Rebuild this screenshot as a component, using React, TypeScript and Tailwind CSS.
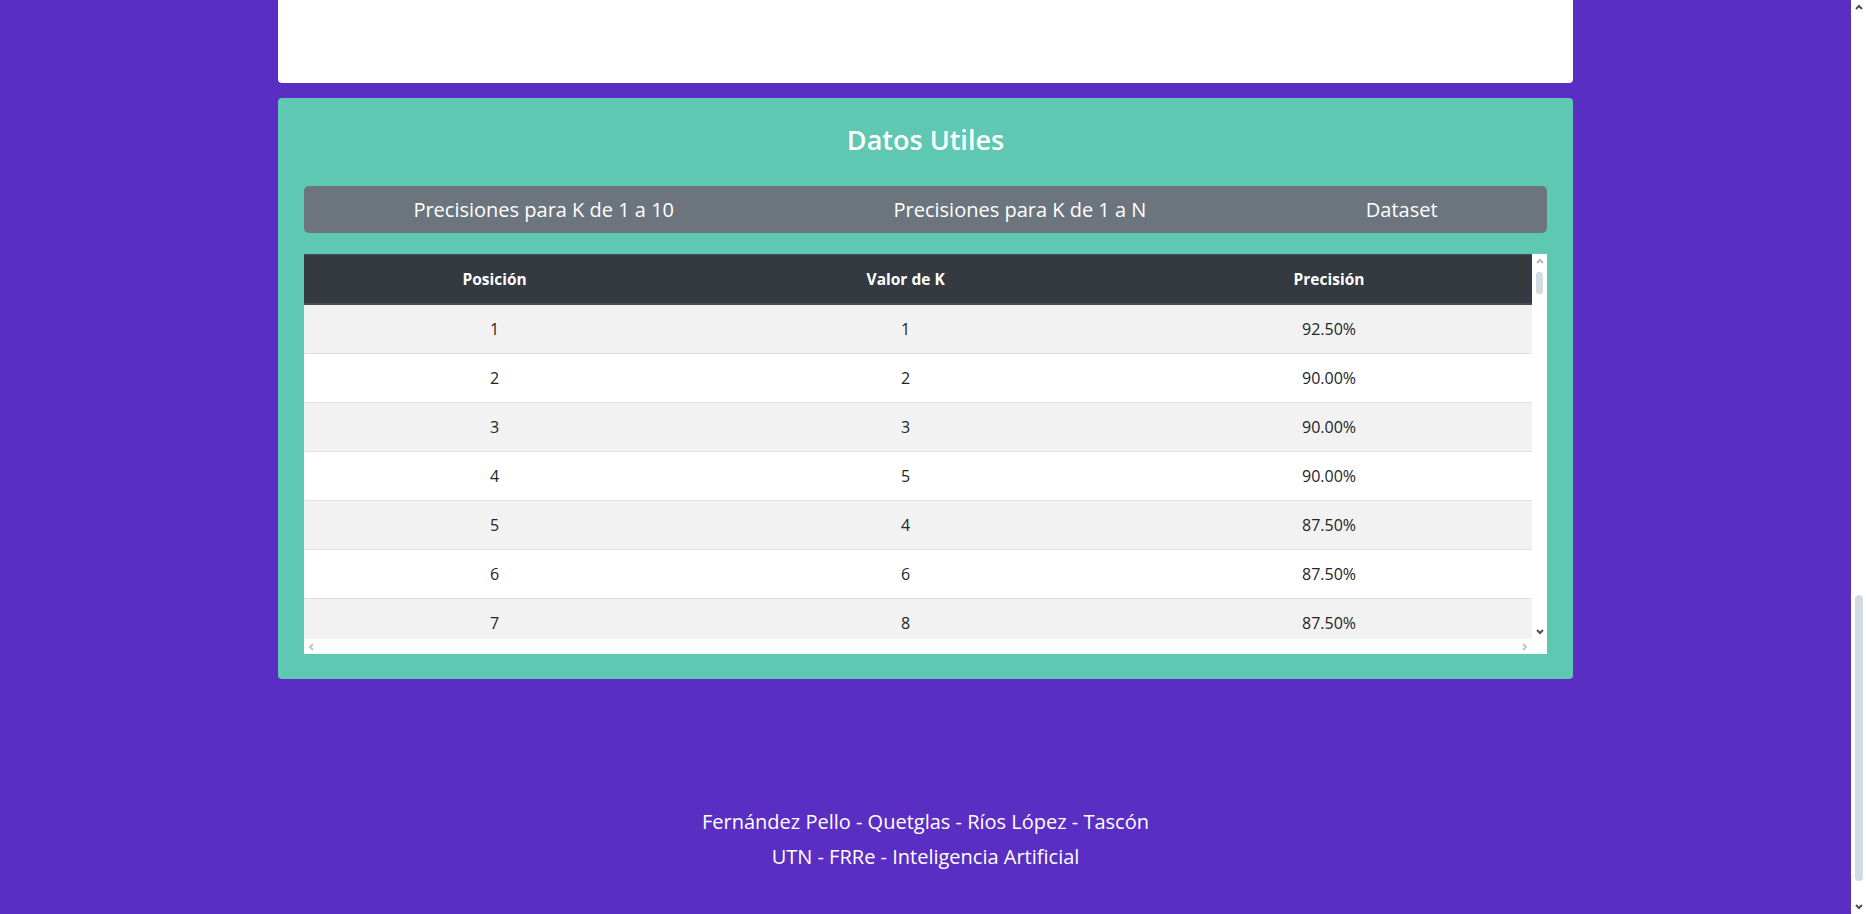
import { useLayoutEffect, useRef } from 'react';

const firstRows = [
  { k: 1, p: 92.5 },
  { k: 2, p: 90 },
  { k: 3, p: 90 },
  { k: 5, p: 90 },
  { k: 4, p: 87.5 },
  { k: 6, p: 87.5 },
  { k: 8, p: 87.5 },
  { k: 7, p: 85 },
];

const tabs = ['Precisiones para K de 1 a 10', 'Precisiones para K de 1 a N', 'Dataset'];

function Chevron({ dir, color }: { dir: 'up' | 'down' | 'left' | 'right'; color: string }) {
  const pts = {
    up: '1,5 4,2 7,5',
    down: '1,2 4,5 7,2',
    left: '5,1 2,4 5,7',
    right: '2,1 5,4 2,7',
  }[dir];
  const vertical = dir === 'up' || dir === 'down';
  return (
    <svg width={vertical ? 8 : 7} height={vertical ? 7 : 8} viewBox={vertical ? '0 0 8 7' : '0 0 7 8'}>
      <polyline points={pts} fill="none" stroke={color} strokeWidth="2" />
    </svg>
  );
}

export default function App() {
  const pageRef = useRef<HTMLDivElement>(null);

  useLayoutEffect(() => {
    if (pageRef.current) pageRef.current.scrollTop = pageRef.current.scrollHeight;
  }, []);

  return (
    <div className="h-screen flex" style={{ fontFamily: '"Open Sans", "Noto Sans", sans-serif' }}>
      <div ref={pageRef} className="flex-1 h-full overflow-y-scroll bg-[#5b2ec3]">
        <div className="w-[70%] mx-auto pt-[15px]">
          {/* Results card (scrolled out of view) */}
          <div className="h-[1975px] bg-white rounded-[4px]" />

          {/* Datos utiles */}
          <section className="mt-[15px] bg-[#5ec8b2] rounded-[4px] px-[26px] pt-[25px] pb-[25px]">
            <h2 className="text-center text-white text-[27px] leading-[34px] font-semibold">Datos Utiles</h2>

            <nav className="mt-[29px] h-[47px] flex items-center bg-[#6c757d] rounded-[5px]">
              {tabs.map((t) => (
                <a key={t} href="#" className="flex-auto px-4 text-center text-white text-[20px] leading-[30px]">
                  {t}
                </a>
              ))}
            </nav>

            <div className="mt-[21px] h-[400px] flex flex-col bg-white">
              <div className="h-[385px] flex">
                <div className="flex-1 overflow-hidden">
                  <table className="w-full table-fixed border-collapse text-[16px] leading-6 text-[#212529]">
                    <colgroup>
                      <col className="w-[382px]" />
                      <col className="w-[440px]" />
                      <col />
                    </colgroup>
                    <thead>
                      <tr className="bg-[#343a40] text-white text-[15.5px]">
                        <th className="py-3 font-bold text-center border-t border-b-2 border-[#454d55]">Posición</th>
                        <th className="py-3 font-bold text-center border-t border-b-2 border-[#454d55]">Valor de K</th>
                        <th className="py-3 font-bold text-center border-t border-b-2 border-[#454d55]">Precisión</th>
                      </tr>
                    </thead>
                    <tbody>
                      {firstRows.map((r, i) => (
                        <tr key={i} className={i % 2 === 0 ? 'bg-[#f2f2f2]' : 'bg-white'}>
                          <td className="py-3 text-center border-t border-[#dee2e6]">{i + 1}</td>
                          <td className="py-3 text-center border-t border-[#dee2e6]">{r.k}</td>
                          <td className="py-3 text-center border-t border-[#dee2e6]">{r.p.toFixed(2)}%</td>
                        </tr>
                      ))}
                    </tbody>
                  </table>
                </div>
                {/* table vertical scrollbar */}
                <div className="w-[15px] flex flex-col items-center">
                  <div className="h-[15px] flex items-center justify-center">
                    <Chevron dir="up" color="#b8b8b8" />
                  </div>
                  <div className="flex-1 w-full pt-[3px] flex justify-center">
                    <div className="w-[7px] h-[22px] rounded-[3px] bg-[#d2dbe2]" />
                  </div>
                  <div className="h-[15px] flex items-center justify-center">
                    <Chevron dir="down" color="#505050" />
                  </div>
                </div>
              </div>
              {/* table horizontal scrollbar */}
              <div className="h-[15px] flex">
                <div className="flex-1 flex items-center justify-between px-[4px]">
                  <Chevron dir="left" color="#c4c4c4" />
                  <Chevron dir="right" color="#c4c4c4" />
                </div>
                <div className="w-[15px]" />
              </div>
            </div>
          </section>

          {/* Footer */}
          <footer className="pt-[125px] pb-[40px] text-center text-white text-[20px] leading-[35px]">
            <p>Fernández Pello - Quetglas - Ríos López - Tascón</p>
            <p>UTN - FRRe - Inteligencia Artificial</p>
          </footer>
        </div>
      </div>

      {/* page scrollbar */}
      <div className="w-[15px] h-full bg-white flex flex-col items-center">
        <div className="h-[15px] flex items-center justify-center">
          <Chevron dir="up" color="#505050" />
        </div>
        <div className="flex-1 w-full flex flex-col justify-end items-center pb-[18px]">
          <div className="w-[8px] h-[286px] rounded-[4px] bg-[#d2dbe2]" />
        </div>
        <div className="h-[15px] flex items-center justify-center">
          <Chevron dir="down" color="#505050" />
        </div>
      </div>
    </div>
  );
}
